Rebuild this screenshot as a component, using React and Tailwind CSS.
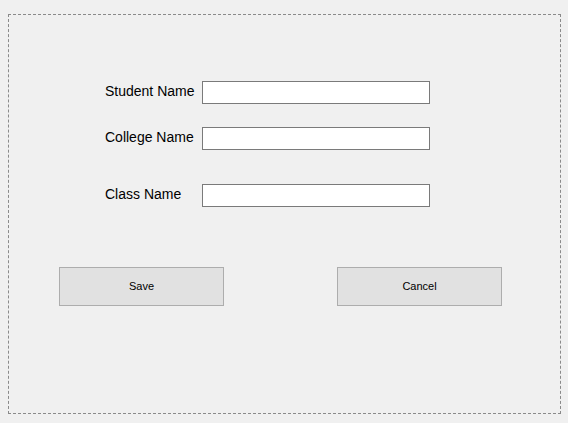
export default function App() {
    const fields = [
        { label: "Student Name", mt: "mt-0" },
        { label: "College Name", mt: "mt-[23px]" },
        { label: "Class Name", mt: "mt-[34px]" },
    ];

    return (
        <div
            className="w-[568px] h-[423px] bg-[#f0f0f0] pt-[14px] pl-[8px] text-black"
            style={{ fontFamily: '"Liberation Sans", Arial, sans-serif' }}
        >
            <div className="w-[553px] h-[400px] border border-dashed border-[#8a8a8a] pt-[66px]">
                {/* form rows */}
                <div className="flex flex-col pl-[96px]">
                    {fields.map((f) => (
                        <div key={f.label} className={`flex flex-row items-center h-[23px] ${f.mt}`}>
                            <span className="w-[97px] text-[14px] leading-none -mt-[4px]">{f.label}</span>
                            <input
                                type="text"
                                className="w-[228px] h-[23px] bg-white border border-[#7a7a7a] outline-none"
                            />
                        </div>
                    ))}
                </div>

                {/* buttons */}
                <div className="flex flex-row gap-[113px] pl-[50px] mt-[60px]">
                    <button className="w-[165px] h-[39px] bg-[#e1e1e1] border border-[#adadad] text-[11px]">
                        Save
                    </button>
                    <button className="w-[165px] h-[39px] bg-[#e1e1e1] border border-[#adadad] text-[11px]">
                        Cancel
                    </button>
                </div>
            </div>
        </div>
    );
}
